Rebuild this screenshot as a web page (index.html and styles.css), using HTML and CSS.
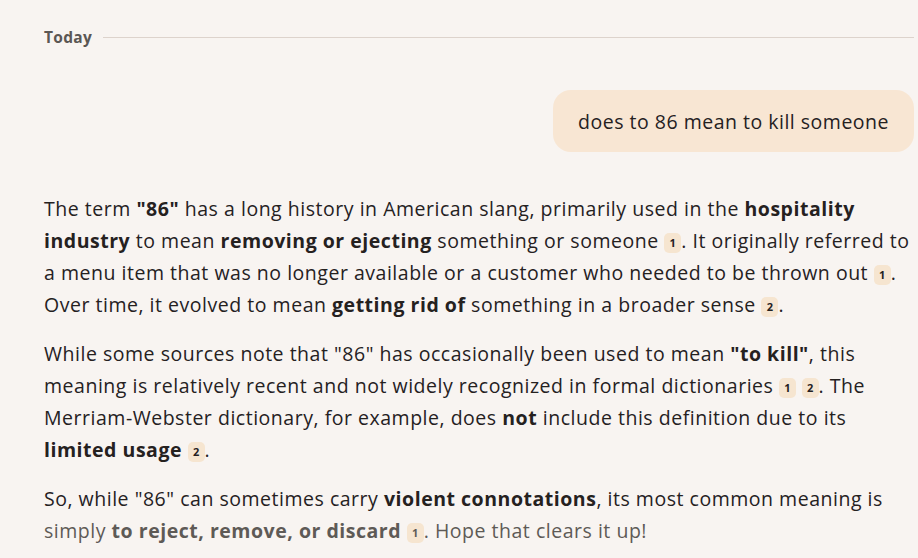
FILE: index.html
```html
<!DOCTYPE html>
<html>
<head>
<meta charset="utf-8">
<link rel="stylesheet" href="styles.css">
</head>
<body>
<div class="page">
  <div class="day">
    <span class="day-label">Today</span>
    <span class="day-line"></span>
  </div>
  <div class="user-row">
    <div class="bubble">does to 86 mean to kill someone</div>
  </div>
  <div class="answer">
    <p>The term <b>"86"</b> has a long history in American slang, primarily used in the <b>hospitality industry</b> to mean <b>removing or ejecting</b> something or someone <span class="cite">1</span>. It originally referred to a menu item that was no longer available or a customer who needed to be thrown out <span class="cite">1</span>. Over time, it evolved to mean <b>getting rid of</b> something in a broader sense <span class="cite">2</span>.</p>
    <p>While some sources note that "86" has occasionally been used to mean <b>"to kill"</b>, this meaning is relatively recent and not widely recognized in formal dictionaries <span class="cite">1</span> <span class="cite">2</span>. The Merriam-Webster dictionary, for example, does <b>not</b> include this definition due to its <b>limited usage</b> <span class="cite">2</span>.</p>
    <p>So, while "86" can sometimes carry <b>violent connotations</b>, its most common meaning is <span class="fade">simply <b>to reject, remove, or discard</b> <span class="cite">1</span>. Hope that clears it up!</span></p>
  </div>
</div>
</body>
</html>
```
FILE: styles.css
```css
html, body {
  margin: 0;
  padding: 0;
  background: #f8f4f1;
}
body {
  font-family: "Open Sans", "Noto Sans", sans-serif;
  color: #25211f;
}
.page {
  padding: 26px 4px 0 44px;
}
.day {
  display: flex;
  align-items: center;
  gap: 11px;
}
.day-label {
  font-size: 15.5px;
  font-weight: 700;
  color: #5b5754;
  letter-spacing: 0.3px;
}
.day-line {
  flex: 1;
  height: 1px;
  background: #ddd3cc;
}
.user-row {
  display: flex;
  justify-content: flex-end;
  margin-top: 42px;
}
.bubble {
  background: #f8e6d3;
  border-radius: 18px;
  padding: 0 25px;
  height: 62px;
  display: flex;
  align-items: center;
  font-size: 19.5px;
  letter-spacing: 0.5px;
}
.answer {
  margin-top: 41px;
  font-size: 19.5px;
  letter-spacing: 0.52px;
  line-height: 32px;
}
.answer p {
  margin: 0 0 17px;
}
.answer b {
  font-weight: 700;
}
.cite {
  display: inline-block;
  background: #f6e5d0;
  border-radius: 5px;
  width: 17px;
  height: 20px;
  line-height: 20px;
  text-align: center;
  font-size: 11px;
  font-weight: 700;
  letter-spacing: 0;
  vertical-align: 1px;
}
.fade {
  color: #5e5a56;
}
```
